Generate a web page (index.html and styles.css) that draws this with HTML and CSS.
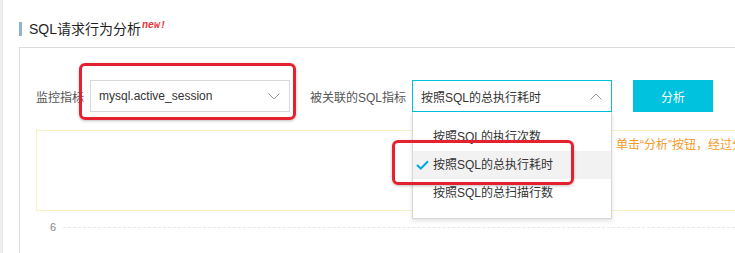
FILE: index.html
```html
<!DOCTYPE html>
<html lang="zh-CN">
<head>
    <meta charset="UTF-8">
    <meta name="viewport" content="width=device-width, initial-scale=1.0">
    <title>SQL请求行为分析</title>
    <link rel="stylesheet" href="styles.css">
</head>
<body>

    <div class="page">
        <div class="rail"></div>
        <div class="main">
            <h2 class="title">SQL请求行为分析<sup class="new">new!</sup></h2>

            <div class="panel">
                <div class="query-row">
                    <span class="label">监控指标</span>
                    <div class="field">
                        <div class="select">
                            <span>mysql.active_session</span>
                            <svg class="chevron" width="12" height="7" viewBox="0 0 12 7"><polyline points="0.5,0.5 6,6 11.5,0.5" fill="none" stroke="#999" stroke-width="1"/></svg>
                        </div>
                        <div class="mark mark-metric"></div>
                    </div>

                    <span class="label label-sql">被关联的SQL指标</span>
                    <div class="field">
                        <div class="select open">
                            <span>按照SQL的总执行耗时</span>
                            <svg class="chevron" width="12" height="7" viewBox="0 0 12 7"><polyline points="0.5,6.5 6,1 11.5,6.5" fill="none" stroke="#999" stroke-width="1"/></svg>
                        </div>
                        <ul class="menu">
                            <li class="menu-item">按照SQL的执行次数</li>
                            <li class="menu-item selected">
                                <svg class="check" width="13" height="10" viewBox="0 0 13 10"><polyline points="1,5 4.8,8.6 12,1.2" fill="none" stroke="#00a8d6" stroke-width="2"/></svg>
                                按照SQL的总执行耗时
                                <div class="mark mark-item"></div>
                            </li>
                            <li class="menu-item">按照SQL的总扫描行数</li>
                        </ul>
                    </div>

                    <button class="btn">分析</button>
                </div>

                <div class="notice">单击“分析”按钮，经过分析后展示SQL请求行为</div>

                <div class="axis">
                    <span class="tick">6</span>
                    <div class="gridline"></div>
                </div>
            </div>
        </div>
    </div>

</body>
</html>
```

FILE: styles.css
```css
* { margin: 0; padding: 0; box-sizing: border-box; }
body {
    font-family: "Liberation Sans", "Noto Sans CJK SC", sans-serif;
    background: #fff;
    color: #333;
    overflow: hidden;
}

.page { display: flex; width: 100%; height: 253px; overflow: hidden; }
.rail { width: 3px; background: #efefef; border-right: 1px solid #e4e4e4; }
.main { flex: 1; min-width: 0; padding-left: 16px; padding-top: 22px; }

.title {
    font-size: 14px;
    font-weight: normal;
    line-height: 14px;
    color: #1f1f1f;
    border-left: 3px solid #8bb5d3;
    padding-left: 7px;
    height: 14px;
}
.new {
    font-family: "Liberation Mono", monospace;
    font-style: italic;
    font-weight: bold;
    font-size: 10px;
    color: #e8333a;
    vertical-align: top;
    line-height: 8px;
    margin-left: 1px;
}

.panel {
    margin-top: 11px;
    border-top: 1px solid #dcdcdc;
    border-left: 1px solid #dcdcdc;
    padding: 32px 0 0 16px;
    height: 206px;
}

.query-row { display: flex; align-items: center; height: 32px; }
.label { font-size: 12px; color: #555; margin-right: 6px; }
.label-sql { margin-left: 20px; }

.field { position: relative; }
.select {
    width: 200px;
    height: 32px;
    border: 1px solid #d9d9d9;
    display: flex;
    align-items: center;
    justify-content: space-between;
    padding: 0 9px 0 8px;
    font-size: 12px;
    color: #333;
}
.select.open { border-color: #00c1de; }

.btn {
    margin-left: 21px;
    width: 80px;
    height: 32px;
    border: none;
    background: #00c1de;
    color: #fff;
    font-family: inherit;
    font-size: 12px;
}

.menu {
    position: absolute;
    top: 100%;
    left: 0;
    width: 200px;
    list-style: none;
    background: #fff;
    border: 1px solid #d9d9d9;
    border-top: none;
    padding: 11px 0;
    box-shadow: 0 2px 4px rgba(0,0,0,0.12);
    z-index: 2;
}
.menu-item {
    position: relative;
    height: 28px;
    line-height: 28px;
    padding-left: 20px;
    font-size: 12px;
    color: #333;
}
.menu-item.selected { background: #f2f2f2; }
.check { position: absolute; left: 3px; top: 9px; }

.mark {
    position: absolute;
    border: 3px solid #e4222f;
    border-radius: 6px;
    box-shadow: 0 1px 3px rgba(0,0,0,0.25);
    pointer-events: none;
    z-index: 3;
}
.mark-metric { top: -17px; right: -6px; bottom: -8px; left: -11px; }
.mark-item { top: -11px; bottom: -6px; left: -21px; right: 37px; }

.notice {
    margin-top: 18px;
    height: 81px;
    border: 1px solid #f8efc4;
    border-right: none;
    padding: 5px 0 0 579px;
    font-size: 12px;
    line-height: 18px;
    color: #f39a2b;
    white-space: nowrap;
    overflow: hidden;
}

.axis { display: flex; align-items: center; margin-top: 10px; padding-left: 14px; }
.tick { font-size: 11px; color: #888; width: 13px; }
.gridline { flex: 1; border-top: 1px dashed #e8e8e8; }
```
